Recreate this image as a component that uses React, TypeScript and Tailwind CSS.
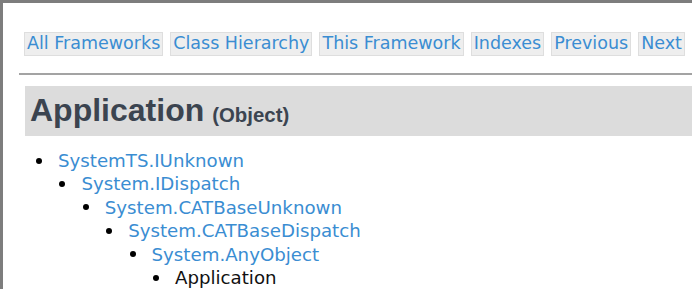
import React from "react";

const navItems = [
  "All Frameworks",
  "Class Hierarchy",
  "This Framework",
  "Indexes",
  "Previous",
  "Next",
];

const chain = [
  "SystemTS.IUnknown",
  "System.IDispatch",
  "System.CATBaseUnknown",
  "System.CATBaseDispatch",
  "System.AnyObject",
];

function Item({ level }: { level: number }) {
  const isLast = level === chain.length;
  const label = isLast ? "Application" : chain[level];
  return (
    <li>
      <div className="flex items-center h-[23.4px]">
        <span className="w-[6px] h-[6px] rounded-full bg-black shrink-0" />
        <span
          className={
            "ml-[16px] whitespace-nowrap " +
            (isLast ? "text-[#111111]" : "text-[#3a8dd2]")
          }
        >
          {label}
        </span>
      </div>
      {!isLast && (
        <ul className="pl-[23.4px]">
          <Item level={level + 1} />
        </ul>
      )}
    </li>
  );
}

export default function App() {
  return (
    <div
      className="w-[692px] h-[289px] overflow-hidden bg-white border-t-[3px] border-l-[3px] border-[#7d7d7d]"
      style={{ fontFamily: '"DejaVu Sans", Verdana, sans-serif' }}
    >
      <div className="pt-[29px] pl-[21px] flex gap-[7px] text-[17.5px] leading-none">
        {navItems.map((n) => (
          <span
            key={n}
            className="h-[24px] px-[2px] flex items-center bg-[#eeeeee] border border-[#dedede] text-[#3a8dd2] whitespace-nowrap"
          >
            {n}
          </span>
        ))}
      </div>
      <div className="mt-[17px] ml-[16px] h-[2px] bg-[#a3a3a3]" />
      <div
        className="mt-[11px] ml-[22px] h-[50px] bg-[#dcdcdc] flex items-end pl-[5px] pb-[10px] text-[#3b4450]"
        style={{ fontFamily: '"Liberation Sans", Arial, sans-serif' }}
      >
        <span className="text-[32px] font-bold leading-none">Application</span>
        <span className="text-[20.4px] font-bold leading-none ml-[8px] mb-[1px]">(Object)</span>
      </div>
      <ul className="mt-[13px] pl-[33px] text-[18.2px] leading-[23.4px]">
        <Item level={0} />
      </ul>
    </div>
  );
}
